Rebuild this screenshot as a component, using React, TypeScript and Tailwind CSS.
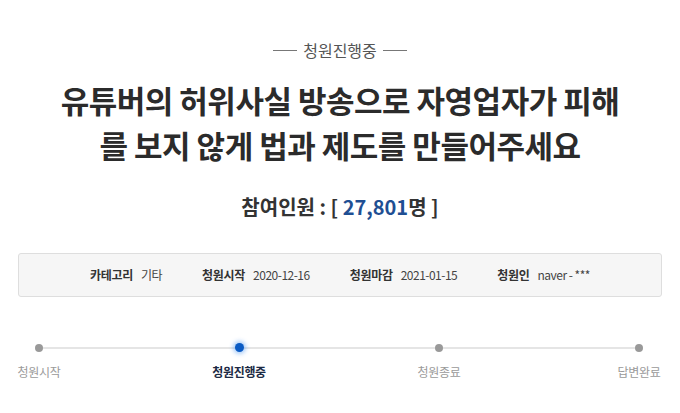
const steps = [
  { label: "청원시작", active: false },
  { label: "청원진행중", active: true },
  { label: "청원종료", active: false },
  { label: "답변완료", active: false },
];

const info = [
  { k: "카테고리", v: "기타" },
  { k: "청원시작", v: "2020-12-16" },
  { k: "청원마감", v: "2021-01-15" },
  { k: "청원인", v: "naver - ***" },
];

export default function App() {
  return (
    <div
      className="w-[680px] h-[413px] bg-white overflow-hidden"
      style={{ fontFamily: '"Noto Sans CJK KR", "Noto Sans", sans-serif' }}
    >
      <div className="pt-[38px] flex items-center justify-center gap-[6px] text-[16px] text-[#555]">
        <span className="w-[24px] h-px bg-[#777]" />
        <span className="leading-[24px]">청원진행중</span>
        <span className="w-[24px] h-px bg-[#777]" />
      </div>

      <h1 className="mt-[15px] text-center text-[31px] leading-[45px] font-bold text-[#2b2b2b] tracking-[-0.5px]">
        유튜버의 허위사실 방송으로 자영업자가 피해
        <br />를 보지 않게 법과 제도를 만들어주세요
      </h1>

      <div className="mt-[25px] text-center text-[20px] leading-[30px] font-bold text-[#333]">
        참여인원 : [ <span className="text-[#1f4f93]">27,801</span>명 ]
      </div>

      <div className="mt-[31px] mx-[18px] h-[44px] rounded-[3px] border border-[#dedede] bg-[#f6f6f6] flex items-center justify-center gap-[40px] text-[12px] text-[#333]">
        {info.map((i) => (
          <div key={i.k} className="flex items-center gap-[8px]">
            <span className="font-bold tracking-[-0.3px]">{i.k}</span>
            <span className="text-[#444] tracking-[-0.5px]">{i.v}</span>
          </div>
        ))}
      </div>

      <div className="mt-[46px] ml-[39px] w-[600px] relative">
        <div className="absolute left-0 right-0 top-[4px] h-[2px] bg-[#e5e5e5]" />
        <div className="relative flex justify-between">
          {steps.map((s) => (
            <div key={s.label} className="w-0 flex flex-col items-center">
              {s.active ? (
                <span className="w-[9px] h-[9px] rounded-full bg-[#0b5bc4] shadow-[0_0_4px_2px_rgba(60,140,240,0.45)]" />
              ) : (
                <span className="w-[8px] h-[8px] mt-[1px] rounded-full bg-[#999]" />
              )}
              <span
                className={
                  "mt-[10px] whitespace-nowrap text-[12px] leading-[20px] tracking-[-0.3px] " +
                  (s.active ? "font-bold text-[#1c2a44]" : "text-[#9a9a9a]")
                }
              >
                {s.label}
              </span>
            </div>
          ))}
        </div>
      </div>
    </div>
  );
}
